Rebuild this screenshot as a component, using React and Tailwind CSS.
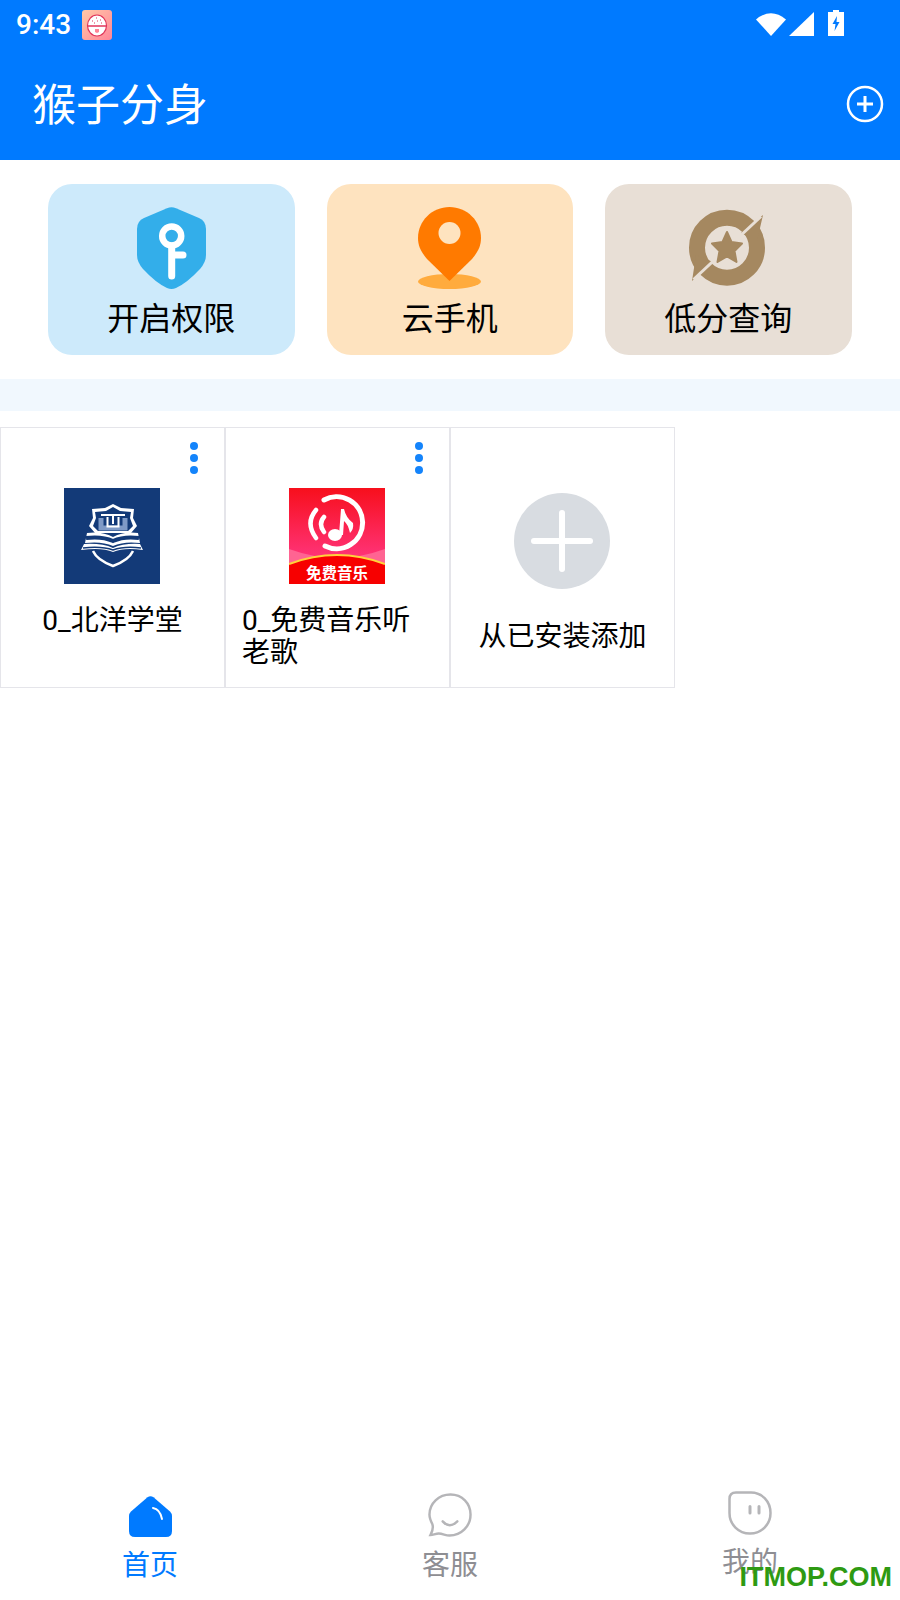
import React from "react";

const ShieldIcon = () => (
  <svg width="69" height="82" viewBox="0 0 69 82">
    <path
      d="M30 1.2Q34.5-.6 39 1.2L62 11Q69 14 69 22V48Q69 55 63 62 50 76 39 81 34.5 82.8 30 81 19 76 6 62 0 55 0 48V22Q0 14 7 11Z"
      fill="#33aeea"
    />
    <circle cx="34.7" cy="29" r="9.500" fill="none" stroke="#fff" strokeWidth="6.500" />
    <path d="M34.700 39V69M34.700 48H46" fill="none" stroke="#fff" strokeWidth="7" strokeLinecap="round" />
  </svg>
);

const PinIcon = () => (
  <svg width="63" height="82" viewBox="0 0 63 82">
    <ellipse cx="31.5" cy="74.5" rx="31.5" ry="7.5" fill="#ffab3d" />
    <path
      d="M31.5 0C48.9 0 63 14 63 31 63 40 59 46 54 52L31.5 74 9 52C4 46 0 40 0 31 0 14 14.1 0 31.5 0Z"
      fill="#ff7a00"
    />
    <circle cx="31.5" cy="26" r="11" fill="#fee3bf" />
  </svg>
);

const StarBadgeIcon = () => (
  <svg width="82" height="82" viewBox="18 12 82 82">
    <circle cx="58" cy="52.7" r="30" fill="none" stroke="#a58860" strokeWidth="16" />
    <path d="M94 20L88 46 72 38ZM23 86L27 60 44 67Z" fill="#a58860" />
    <path d="M92 21.5L24.5 84.5" stroke="#e8dfd6" strokeWidth="3" />
    <path
      d="M58 37L62.500 47 73 48.500 65.500 56 67.500 67 58 61.500 48.500 67 50.500 56 43 48.500 53.500 47Z"
      fill="#a58860"
      stroke="#a58860"
      strokeWidth="2"
      strokeLinejoin="round"
    />
  </svg>
);

const SchoolIcon = () => (
  <svg width="96" height="96" viewBox="0 0 96 96" className="block">
    <rect width="96" height="96" fill="#133a78" />
    <path
      d="M49 16L57 20 70 21 69 30 73 38 67 45H31L25 38 29 30 28 21 41 20Z"
      fill="#fff"
    />
    <path
      d="M49 19L56 23 67 24 66 30 69 38 64 43H34L29 38 32 30 31 24 42 23Z"
      fill="#133a78"
    />
    <path d="M37 27H61" stroke="#fff" strokeWidth="2" />
    <path d="M37 30V40H61V30" fill="none" stroke="#7f9ac6" strokeWidth="5" />
    <path d="M43.500 29V38.500H54.500V29" fill="none" stroke="#fff" strokeWidth="2" />
    <path d="M49 28V36" stroke="#fff" strokeWidth="2" />
    <path d="M23 45Q38 43 49 49 60 43 74 45L76 55Q60 53 49 58 38 53 21 55Z" fill="#fff" />
    <path d="M22 50Q38 48 49 53 60 48 75 50" fill="none" stroke="#133a78" strokeWidth="4" />
    <path d="M17 62L20 56Q38 55 49 60 60 55 76 56L79 62Q60 59 49 64 38 59 17 62Z" fill="#fff" />
    <path d="M19 60Q38 58 49 62 60 58 77 60" fill="none" stroke="#133a78" strokeWidth="1.500" />
    <path d="M29 63Q33 72 49 78 65 72 69 63" fill="none" stroke="#fff" strokeWidth="2.500" />
  </svg>
);

const MusicIcon = () => (
  <svg width="96" height="96" viewBox="0 0 96 96" className="block">
    <defs>
      <linearGradient id="musicBg" x1="0" y1="0" x2="0" y2="1">
        <stop offset="0" stopColor="#f70f1c" />
        <stop offset="0.7" stopColor="#ff3275" />
      </linearGradient>
    </defs>
    <rect width="96" height="96" fill="url(#musicBg)" />
    <path d="M0 61Q25 70 48 70 71 70 96 61V96H0Z" fill="#ff6492" />
    <path d="M0 76Q48 58 96 76V96H0Z" fill="#f70000" />
    <path d="M0 76Q48 58 96 76" fill="none" stroke="#ffd23c" strokeWidth="2" />
    <path d="M35 12A26 26 0 1 1 36 58" fill="none" stroke="#fff" strokeWidth="5" strokeLinecap="round" />
    <path d="M27 22Q16 35 27 50M35 29Q29 36 35 44" fill="none" stroke="#fff" strokeWidth="4.500" strokeLinecap="round" />
    <ellipse cx="46" cy="47" rx="7" ry="6" fill="#fff" />
    <path d="M50 47L52 21 55 21Q57 30 64 35 65 41 61 45 59 36 55 33L54 47Z" fill="#fff" />
    <text
      x="48"
      y="91"
      textAnchor="middle"
      fontSize="15.500"
      fontWeight="700"
      fill="#fff"
      fontFamily="'Noto Sans CJK SC', sans-serif"
    >
      免费音乐
    </text>
  </svg>
);

const HomeIcon = () => (
  <svg width="43" height="41" viewBox="0 0 43 41">
    <path
      d="M18.500 1.200Q21.500-.8 24.500 1.200L41 15.500Q43 17.500 43 20V35Q43 41 37 41H6Q0 41 0 35V20Q0 17.500 2 15.500Z"
      fill="#007aff"
    />
    <path d="M24 12Q31 13 33 23" fill="none" stroke="#fff" strokeWidth="2" strokeLinecap="round" />
  </svg>
);

const ChatIcon = () => (
  <svg width="44" height="44" viewBox="0 0 45 45" fill="none" stroke="#b5b5b8" strokeWidth="2.500">
    <path d="M23 1.500C35 1.500 43.500 10.500 43.500 22 43.500 34 34 43.500 22 43.500 18 43.500 15 41.500 11 41.500 8 41.500 5 43 2.500 43 4.500 39 6 36.500 4.500 32 2.500 28 1.500 25 1.500 22 1.500 10.500 11 1.500 23 1.500Z" />
    <path d="M15 29Q22 37 30 29" strokeLinecap="round" />
  </svg>
);

const MeIcon = () => (
  <svg width="44" height="44" viewBox="0 0 44 44" fill="none" stroke="#b5b5b8" strokeWidth="2.500">
    <path d="M8 1.500H23C34 1.500 42.500 10.500 42.500 22 42.500 33.500 33.500 42.500 22 42.500 10.500 42.500 1.500 33.500 1.500 22V8Q1.500 1.500 8 1.500Z" />
    <path d="M22 15.500V22M31 15.500V22" strokeWidth="3" strokeLinecap="round" />
  </svg>
);

const RiceIcon = () => (
  <svg width="30" height="30" viewBox="0 0 30 30">
    <defs>
      <linearGradient id="riceBg" x1="0" y1="0" x2="1" y2="1">
        <stop offset="0" stopColor="#ffc9a8" />
        <stop offset="1" stopColor="#ff8598" />
      </linearGradient>
    </defs>
    <rect width="30" height="30" rx="3" fill="url(#riceBg)" />
    <ellipse cx="15" cy="15.500" rx="9.500" ry="10.500" fill="#fff" stroke="#e0355a" strokeWidth="1.200" />
    <path d="M5.500 16H24.500" stroke="#e0355a" strokeWidth="1.500" />
    <path d="M10 11h1M14 8h1M18 10h1M15 11h1M12 13h1M19 13h1" stroke="#e0355a" strokeWidth="1.200" />
    <path d="M13 19h4v3l-2 1-2-1z" fill="#ff8598" />
  </svg>
);

const StatusIcons = () => (
  <div className="absolute left-[756px] top-[10px] flex items-end gap-[3px]">
    <svg width="30" height="24" viewBox="0 0 30 24">
      <path d="M0 7.500Q15-5 30 7.500L15 24Z" fill="#fff" />
    </svg>
    <svg width="26" height="24" viewBox="0 0 26 24">
      <path d="M25 0V24H0Z" fill="#fff" />
    </svg>
    <svg width="16" height="26" viewBox="0 0 16 26" className="ml-[10px]">
      <path d="M5 0H11V2H16V26H0V2H5Z" fill="#fff" />
      <path d="M9 6L4.500 14H7.500L6.500 21 11.500 12H8.500Z" fill="#007aff" />
    </svg>
  </div>
);

const shortcuts = [
  { label: "开启权限", bg: "bg-[#cdeafb]", icon: <ShieldIcon /> },
  { label: "云手机", bg: "bg-[#fee3bf]", icon: <PinIcon /> },
  { label: "低分查询", bg: "bg-[#e8dfd6]", icon: <StarBadgeIcon /> },
];

const AppCell = ({ name, icon }) => (
  <div className="relative w-[225px] h-full border border-[#e5e5ea] flex flex-col items-center pt-[60px] px-[16px]">
    <div className="absolute right-[26px] top-[14px] flex flex-col gap-[4px]">
      <span className="block w-[8px] h-[8px] rounded-full bg-[#1484fb]" />
      <span className="block w-[8px] h-[8px] rounded-full bg-[#1484fb]" />
      <span className="block w-[8px] h-[8px] rounded-full bg-[#1484fb]" />
    </div>
    <div className="-ml-[2px]">{icon}</div>
    <p className="mt-[21px] w-fit text-[28px] leading-[32px] text-black">{name}</p>
  </div>
);

const Tab = ({ label, icon, color, raised }) => (
  <div className={raised ? "flex flex-col items-center -mt-[2px]" : "flex flex-col items-center"}>
    <div className="h-[41px] flex items-end">{icon}</div>
    <span className={(raised ? "mt-[10px] " : "mt-[11px] ") + "text-[28px] leading-[36px] " + color}>{label}</span>
  </div>
);

export default function App() {
  return (
    <div className="relative w-[900px] h-[1600px] bg-white flex flex-col overflow-hidden font-['Roboto','Noto_Sans_CJK_SC',sans-serif]">
      <header className="relative h-[160px] shrink-0 bg-[#007aff] text-white">
        <div className="flex items-center gap-[11px] pl-[16px] pt-[9px]">
          <span className="text-[28px] leading-[32px] font-medium">9:43</span>
          <RiceIcon />
        </div>
        <StatusIcons />
        <div className="flex items-center justify-between pl-[32px] pr-[16px] mt-[31px]">
          <h1 className="pt-[4px] text-[44px] leading-[60px] font-normal">猴子分身</h1>
          <svg width="38" height="38" viewBox="0 0 38 38" fill="none" stroke="#fff">
            <circle cx="19" cy="19" r="17" strokeWidth="2.500" />
            <path d="M11 19H27M19 11V27" strokeWidth="3" />
          </svg>
        </div>
      </header>

      <section className="flex gap-[32px] pl-[48px] pt-[24px] pb-[24px]">
        {shortcuts.map((item) => (
          <div
            key={item.label}
            className={"w-[246.5px] h-[171px] rounded-[24px] flex flex-col items-center pt-[23px] " + item.bg}
          >
            <div className="h-[82px] flex items-center">{item.icon}</div>
            <span className="mt-[8px] text-[32px] leading-[44px] text-black">{item.label}</span>
          </div>
        ))}
      </section>

      <div className="h-[32px] shrink-0 bg-[#f1f8fe]" />

      <section className="flex h-[261px] mt-[16px]">
        <AppCell name="0_北洋学堂" icon={<SchoolIcon />} />
        <AppCell name="0_免费音乐听老歌" icon={<MusicIcon />} />
        <div className="w-[225px] h-full border border-[#e5e5ea] flex flex-col items-center pt-[65px]">
          <div className="relative -ml-[2px] w-[96px] h-[96px] rounded-full bg-[#d8dce1]">
            <span className="absolute left-[17px] top-[45px] w-[62px] h-[6px] rounded-full bg-white" />
            <span className="absolute left-[45px] top-[17px] w-[6px] h-[62px] rounded-full bg-white" />
          </div>
          <p className="mt-[32px] text-[28px] leading-[32px] text-black">从已安装添加</p>
        </div>
      </section>

      <nav className="mt-auto grid grid-cols-3 h-[108px] pt-[4px]">
        <Tab label="首页" color="text-[#007aff]" icon={<HomeIcon />} />
        <Tab label="客服" color="text-[#8e8e93]" icon={<ChatIcon />} />
        <Tab label="我的" color="text-[#8e8e93]" icon={<MeIcon />} raised />
      </nav>

      <span className="absolute right-[8px] bottom-[7px] text-[27px] leading-[32px] font-bold text-[#2e9a12] font-['Liberation_Sans',sans-serif]">
        ITMOP.COM
      </span>
    </div>
  );
}
